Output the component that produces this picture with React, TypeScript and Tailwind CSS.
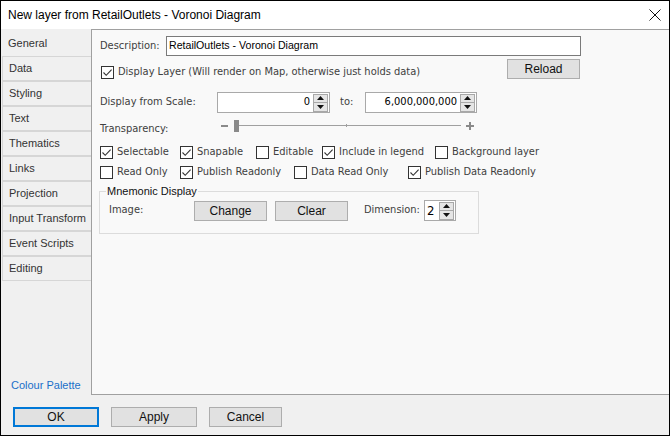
import React from 'react';

const tabs = ['Data', 'Styling', 'Text', 'Thematics', 'Links', 'Projection', 'Input Transform', 'Event Scripts', 'Editing'];

function Check({ checked }: { checked?: boolean }) {
  return (
    <span className="w-[13px] h-[13px] border border-[#333] bg-white flex items-center justify-center shrink-0">
      {checked && (
        <svg width="11" height="11" viewBox="0 0 11 11">
          <path d="M1.5 5.5 L4.2 8.3 L9.6 2.6" fill="none" stroke="#333" strokeWidth="1.1" />
        </svg>
      )}
    </span>
  );
}

function CheckItem({ label, checked, w }: { label: string; checked?: boolean; w: string }) {
  return (
    <div className={`flex items-center gap-[4px] ${w}`}>
      <Check checked={checked} />
      <span>{label}</span>
    </div>
  );
}

function Spin() {
  return (
    <div className="flex flex-col w-[15px] h-[18px] border border-[#a8a8a8] bg-[#e5e5e5] shrink-0">
      <div className="flex-1 flex items-center justify-center border-b border-[#a8a8a8]">
        <svg width="7" height="4" viewBox="0 0 7 4">
          <path d="M3.5 0 L7 4 L0 4 Z" fill="#111" />
        </svg>
      </div>
      <div className="flex-1 flex items-center justify-center">
        <svg width="7" height="4" viewBox="0 0 7 4">
          <path d="M0 0 L7 0 L3.5 4 Z" fill="#111" />
        </svg>
      </div>
    </div>
  );
}

function Btn({ children, w }: { children: React.ReactNode; w: string }) {
  return (
    <div className={`h-[20px] ${w} border border-[#adadad] bg-[#e1e1e1] flex items-center justify-center text-[12px] text-[#111]`}>
      {children}
    </div>
  );
}

export default function App() {
  return (
    <div className="w-[670px] h-[436px] border border-black bg-[#f0f0f0] flex flex-col font-['Liberation_Sans',Arial,sans-serif] text-[#222] overflow-hidden">
      {/* title bar */}
      <div className="h-[28px] bg-white flex items-center justify-between pl-[7px] pr-[8px] shrink-0">
        <span className="text-[12px] text-black">New layer from RetailOutlets - Voronoi Diagram</span>
        <svg width="12" height="12" viewBox="0 0 12 12">
          <path d="M0.5 0.5 L11.5 11.5 M11.5 0.5 L0.5 11.5" stroke="#111" strokeWidth="1" />
        </svg>
      </div>

      {/* body */}
      <div className="h-[366px] flex shrink-0">
        {/* tabs column */}
        <div className="w-[90px] flex flex-col pl-[1px] text-[11px] text-[#333]">
          <div className="h-[27px] flex items-center pl-[6px] pt-[1px]">General</div>
          {tabs.map((t) => (
            <div key={t} className="h-[25px] flex items-center pl-[6px] border-l border-t border-b border-[#d6d6d6] bg-[#f0f0f0]">
              {t}
            </div>
          ))}
          <div className="flex-1" />
          <div className="h-[18px] pl-[9px] text-[#1a6fc9] text-[11px]">Colour Palette</div>
        </div>

        {/* panel */}
        <div className="flex-1 bg-[#f9f9f9] border-l border-t border-b border-[#a0a0a0] font-['DejaVu_Sans_Condensed','Liberation_Sans',sans-serif] text-[11px] text-[#404040]">
          <div className="ml-[8px] w-[481px] flex flex-col">
            {/* description */}
            <div className="mt-[6px] h-[20px] flex items-center">
              <span className="w-[66px]">Description:</span>
              <div className="w-[415px] h-[20px] border border-[#7a7a7a] bg-white flex items-center pl-[2px] font-['Liberation_Sans',Arial,sans-serif] text-[10.6px] text-black">
                RetailOutlets - Voronoi Diagram
              </div>
            </div>

            {/* display layer */}
            <div className="mt-[3px] h-[20px] flex items-start">
              <div className="mt-[5px] ml-[1px] flex items-center gap-[4px]">
                <Check checked />
                <span>Display Layer (Will render on Map, otherwise just holds data)</span>
              </div>
              <div className="ml-auto mr-[1px] font-['Liberation_Sans',Arial,sans-serif]">
                <Btn w="w-[73px]">Reload</Btn>
              </div>
            </div>

            {/* scale */}
            <div className="mt-[13px] h-[21px] flex items-center">
              <span className="w-[117px]">Display from Scale:</span>
              <div className="w-[113px] h-[21px] border border-[#a9a9a9] bg-white flex items-center justify-end pr-[1px] gap-[3px] text-black">
                <span>0</span>
                <Spin />
              </div>
              <span className="ml-[10px] w-[25px]">to:</span>
              <div className="w-[112px] h-[21px] border border-[#a9a9a9] bg-white flex items-center justify-end pr-[1px] gap-[3px] text-black">
                <span>6,000,000,000</span>
                <Spin />
              </div>
            </div>

            {/* transparency */}
            <div className="mt-[6px] h-[13px] flex items-start">
              <span className="w-[121px] mt-[3px] leading-[14px]">Transparency:</span>
              <div className="h-[13px] flex items-center">
                <div className="w-[7px] h-[2px] bg-[#8a8a8a]" />
                <div className="ml-[6px] w-[5px] h-[12px] bg-[#8a8a8a]" />
                <div className="relative w-[222px] h-[1px] bg-[#a0a0a0]">
                  <div className="absolute left-[107px] -top-[1px] w-[1px] h-[3px] bg-[#a0a0a0]" />
                </div>
                <svg className="ml-[5px]" width="8" height="8" viewBox="0 0 8 8">
                  <path d="M0 4 H8 M4 0 V8" stroke="#8a8a8a" strokeWidth="2" />
                </svg>
              </div>
            </div>

            {/* checkboxes row 1 */}
            <div className="mt-[13px] h-[14px] flex items-center">
              <CheckItem w="w-[80px]" label="Selectable" checked />
              <CheckItem w="w-[76px]" label="Snapable" checked />
              <CheckItem w="w-[66px]" label="Editable" />
              <CheckItem w="w-[113px]" label="Include in legend" checked />
              <CheckItem w="w-[110px]" label="Background layer" />
            </div>

            {/* checkboxes row 2 */}
            <div className="mt-[6px] h-[14px] flex items-center">
              <CheckItem w="w-[80px]" label="Read Only" />
              <CheckItem w="w-[114px]" label="Publish Readonly" checked />
              <CheckItem w="w-[114px]" label="Data Read Only" />
              <CheckItem w="w-[150px]" label="Publish Data Readonly" checked />
            </div>

            {/* mnemonic group */}
            <div className="relative mt-[12px] -ml-[1px] w-[380px] h-[43px] border border-[#dcdcdc] pl-[9px] pt-[8px]">
              <span className="absolute left-[6px] -top-[8px] px-[1px] bg-[#f9f9f9] font-['Liberation_Sans',Arial,sans-serif] text-[11px] text-[#111] leading-[14px]">
                Mnemonic Display
              </span>
              <div className="h-[21px] flex items-center">
                <span className="w-[85px]">Image:</span>
                <div className="font-['Liberation_Sans',Arial,sans-serif]">
                  <Btn w="w-[73px]">Change</Btn>
                </div>
                <div className="ml-[8px] font-['Liberation_Sans',Arial,sans-serif]">
                  <Btn w="w-[73px]">Clear</Btn>
                </div>
                <span className="ml-[16px] w-[60px]">Dimension:</span>
                <div className="w-[32px] h-[21px] border border-[#a9a9a9] bg-white flex items-center justify-between pl-[2px] pr-[1px] text-[13px] text-black">
                  <span>2</span>
                  <Spin />
                </div>
              </div>
            </div>
          </div>
        </div>
      </div>

      {/* footer */}
      <div className="flex-1 flex items-start pt-[12px] pl-[12px] gap-[12px] text-[12px]">
        <div className="h-[20px] w-[86px] border-2 border-[#0078d7] bg-[#e1e1e1] flex items-center justify-center text-[#111]">OK</div>
        <Btn w="w-[86px]">Apply</Btn>
        <Btn w="w-[73px]">Cancel</Btn>
      </div>
    </div>
  );
}
